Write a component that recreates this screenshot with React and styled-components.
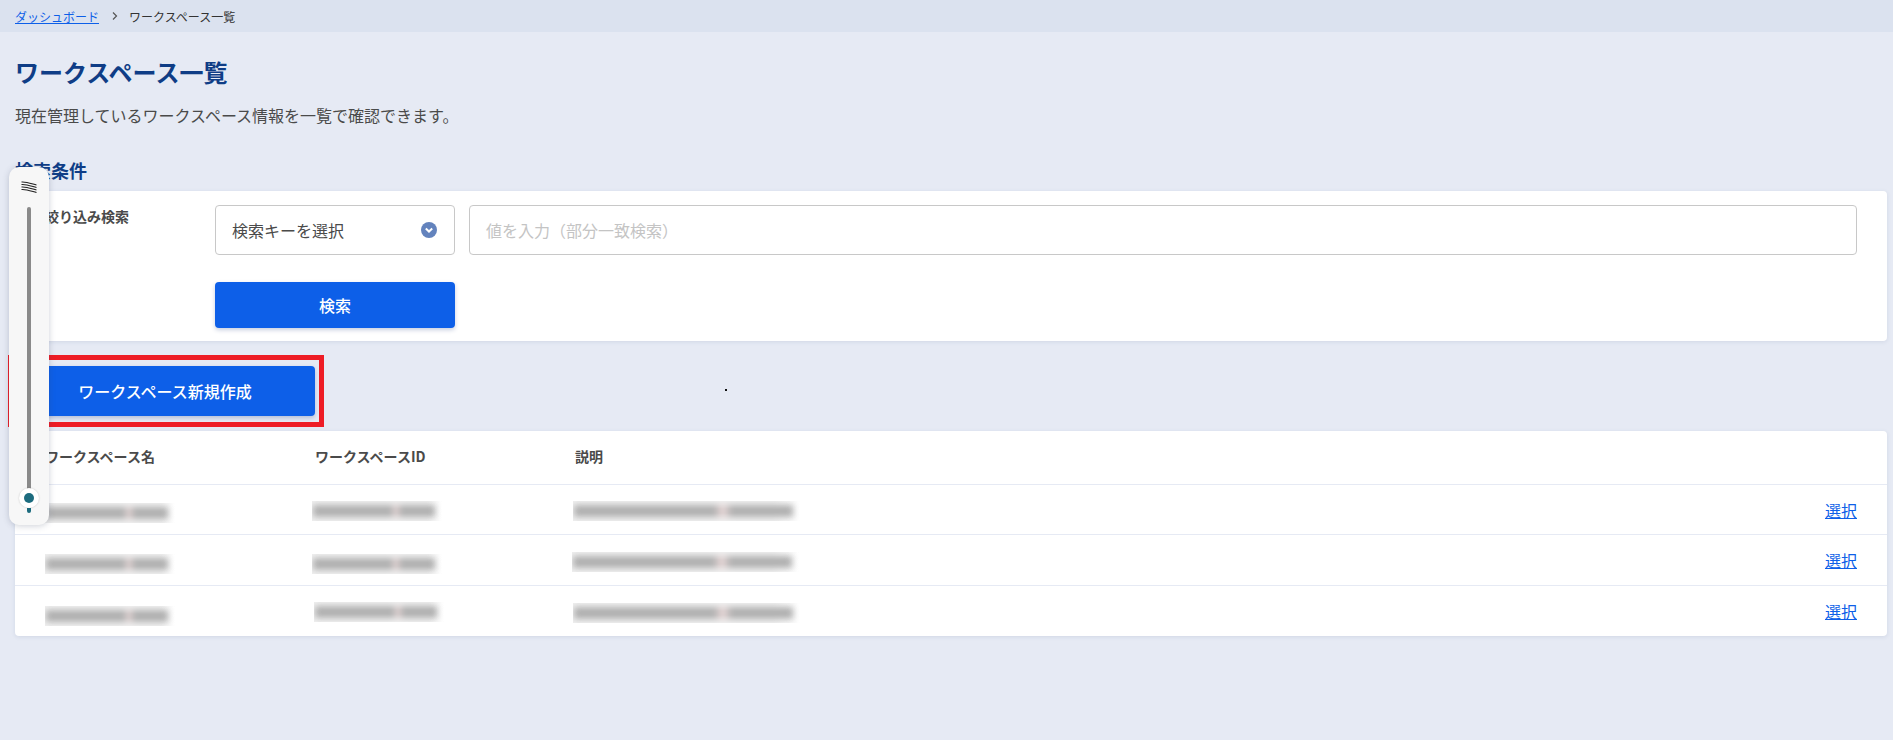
import React from "react";
import styled, { createGlobalStyle } from "styled-components";

const Global = createGlobalStyle`
    html, body {
        margin: 0;
        padding: 0;
        background: #e6eaf4;
        font-family: "Noto Sans CJK JP", "Noto Sans", sans-serif;
    }
`;

const Page = styled.div`
    position: relative;
    width: 1893px;
    height: 740px;
    overflow: hidden;
    background: #e6eaf4;
`;

const Breadcrumb = styled.nav`
    display: flex;
    align-items: center;
    height: 32px;
    padding-left: 15px;
    background: #dbe2ef;
    font-size: 12px;
    color: #333;
`;

const CrumbLink = styled.a`
    width: 86px;
    color: #0d5fe8;
    text-decoration: underline;
    white-space: nowrap;
`;

const CrumbSep = styled.span`
    display: flex;
    width: 28px;
    justify-content: center;
    color: #555;
`;

const Main = styled.main`
    padding: 0 6px 0 15px;
`;

const Title = styled.h1`
    margin: 22px 0 0;
    font-size: 24px;
    line-height: 36px;
    font-weight: 700;
    color: #0f3d86;
`;

const Lead = styled.p`
    margin: 13px 0 0;
    font-size: 16px;
    line-height: 24px;
    color: #4a4a4a;
`;

const SectionTitle = styled.h2`
    margin: 30px 0 0;
    font-size: 18px;
    line-height: 26px;
    height: 34px;
    font-weight: 700;
    color: #0f3d86;
`;

const Card = styled.section`
    background: #fff;
    border-radius: 4px;
    box-shadow: 0 1px 4px rgba(60, 80, 130, 0.12);
`;

const SearchCard = styled(Card)`
    display: grid;
    grid-template-columns: 170px 240px 1fr;
    column-gap: 0;
    row-gap: 27px;
    padding: 14px 30px 13px;
`;

const FieldLabel = styled.label`
    font-size: 14px;
    line-height: 22px;
    font-weight: 700;
    color: #4a4a4a;
`;

const Select = styled.div`
    display: flex;
    align-items: center;
    justify-content: space-between;
    box-sizing: border-box;
    height: 50px;
    padding: 0 17px 0 16px;
    border: 1px solid #c8c8c8;
    border-radius: 4px;
    font-size: 16px;
    color: #4a4a4a;
`;

const TextInput = styled.div`
    display: flex;
    align-items: center;
    box-sizing: border-box;
    height: 50px;
    margin-left: 14px;
    padding-left: 16px;
    border: 1px solid #c8c8c8;
    border-radius: 4px;
    font-size: 16px;
    color: #c4c4c4;
`;

const Button = styled.button`
    display: block;
    width: ${props => props.$width}px;
    height: ${props => props.$height}px;
    padding: 0;
    border: 0;
    border-radius: 4px;
    background: #0d5fe8;
    box-shadow: 0 2px 4px rgba(30, 60, 130, 0.25);
    color: #fff;
    font-family: inherit;
    font-size: 16px;
    font-weight: 500;
`;

const ActionRow = styled.div`
    position: relative;
    padding: 25px 0 15px;
`;

const Highlight = styled.div`
    position: absolute;
    left: -7px;
    top: 14px;
    width: 316px;
    height: 72px;
    box-sizing: border-box;
    border: 5px solid #ee1c25;
    background: transparent;
    pointer-events: none;
`;

const TableCard = styled(Card)``;

const Row = styled.div`
    display: grid;
    grid-template-columns: 270px 260px 1fr auto;
    align-items: center;
    box-sizing: border-box;
    height: ${props => props.$height}px;
    padding: 0 30px;
    border-bottom: ${props => (props.$last ? "0" : "1px solid #e6eaf4")};
`;

const HeadCell = styled.div`
    margin-bottom: 4px;
    font-size: 14px;
    font-weight: 700;
    color: #4a4a4a;
`;

const Redacted = styled.div`
    position: relative;
    overflow: hidden;
    width: ${props => props.$width}px;
    height: 20px;
    margin-left: ${props => props.$x}px;
    margin-top: ${props => props.$y * 2}px;
    background: linear-gradient(to right, #f1f1f1 88%, #ffffff 100%);
`;

const RedactedInk = styled.div`
    position: absolute;
    left: 1px;
    right: 7px;
    top: 4px;
    height: 12px;
    background: linear-gradient(
        to right,
        #b0b0b0 0,
        #b0b0b0 64%,
        #ead8d8 68%,
        #b0b0b0 72%,
        #b0b0b0 100%
    );
    filter: blur(3px);
`;

const SelectLink = styled.a`
    font-size: 16px;
    color: #0d5fe8;
    text-decoration: underline;
`;

const Zoomer = styled.aside`
    position: absolute;
    left: 9px;
    top: 167px;
    width: 40px;
    height: 358px;
    background: #f7f7f7;
    border-radius: 10px;
    box-shadow: 0 1px 6px rgba(60, 70, 100, 0.25);
`;

const ZoomerIcon = styled.svg`
    position: absolute;
    left: 12px;
    top: 14px;
`;

const ZoomerTrack = styled.div`
    position: absolute;
    left: 18px;
    top: 40px;
    width: 4px;
    height: 283px;
    border-radius: 2px;
    background: #8a8a8a;
`;

const ZoomerKnob = styled.div`
    position: absolute;
    left: 10px;
    top: 321px;
    width: 20px;
    height: 20px;
    border-radius: 50%;
    background: #fff;
    box-shadow: 0 0 2px rgba(0, 0, 0, 0.2);
    display: flex;
    align-items: center;
    justify-content: center;

    &::after {
        content: "";
        width: 10px;
        height: 10px;
        border-radius: 50%;
        background: #1c6b7e;
    }
`;

const ZoomerEnd = styled.div`
    position: absolute;
    left: 18px;
    top: 341px;
    width: 4px;
    height: 5px;
    border-radius: 0 0 2px 2px;
    background: #1c6b7e;
`;

const Speck = styled.div`
    position: absolute;
    left: 725px;
    top: 389px;
    width: 2px;
    height: 2px;
    background: #111;
`;

const rows = [
    [{ x: 0, y: 3 }, { x: -3, y: 1 }, { x: -2, y: 1 }],
    [{ x: 0, y: 3.5 }, { x: -3, y: 3.5 }, { x: -3, y: 1.5 }],
    [{ x: 0, y: 5 }, { x: -1, y: 1 }, { x: -2, y: 2 }],
];

export default function App() {
    return (
        <Page>
            <Global />
            <Breadcrumb>
                <CrumbLink>ダッシュボード</CrumbLink>
                <CrumbSep>
                    <svg width="8" height="10" viewBox="0 0 8 10" fill="none" stroke="#555" strokeWidth="1.2">
                        <path d="M2 1.5 L5.5 5 L2 8.5" />
                    </svg>
                </CrumbSep>
                <span>ワークスペース一覧</span>
            </Breadcrumb>
            <Main>
                <Title>ワークスペース一覧</Title>
                <Lead>現在管理しているワークスペース情報を一覧で確認できます。</Lead>
                <SectionTitle>検索条件</SectionTitle>
                <SearchCard>
                    <FieldLabel>絞り込み検索</FieldLabel>
                    <Select>
                        検索キーを選択
                        <svg width="16" height="16" viewBox="0 0 16 16">
                            <circle cx="8" cy="8" r="8" fill="#6383bd" />
                            <path d="M4.8 6.6 L8 9.6 L11.2 6.6" fill="none" stroke="#fff" strokeWidth="2" />
                        </svg>
                    </Select>
                    <TextInput>値を入力（部分一致検索）</TextInput>
                    <span />
                    <Button $width={240} $height={46}>検索</Button>
                </SearchCard>
                <ActionRow>
                    <Button $width={300} $height={50}>ワークスペース新規作成</Button>
                    <Highlight />
                </ActionRow>
                <TableCard>
                    <Row $height={54}>
                        <HeadCell>ワークスペース名</HeadCell>
                        <HeadCell>ワークスペースID</HeadCell>
                        <HeadCell>説明</HeadCell>
                        <span />
                    </Row>
                    {rows.map((cells, i) => (
                        <Row key={i} $height={i === 1 ? 51 : 50} $last={i === 2}>
                            <Redacted $width={130} $x={cells[0].x} $y={cells[0].y}><RedactedInk /></Redacted>
                            <Redacted $width={130} $x={cells[1].x} $y={cells[1].y}><RedactedInk /></Redacted>
                            <Redacted $width={227} $x={cells[2].x} $y={cells[2].y}><RedactedInk /></Redacted>
                            <SelectLink>選択</SelectLink>
                        </Row>
                    ))}
                </TableCard>
            </Main>
            <Speck />
            <Zoomer>
                <ZoomerIcon width="16" height="12" viewBox="0 0 16 12" fill="none" stroke="#222" strokeWidth="1.1">
                    <path d="M0.5 1 C5 0.5 10 2.5 15.5 4" />
                    <path d="M0.5 3.5 C5 3 10 5 15.5 6.5" />
                    <path d="M0.5 6 C5 5.5 10 7.5 15.5 9" />
                    <path d="M0.5 8.5 C5 8 10 10 15.5 11.5" />
                </ZoomerIcon>
                <ZoomerTrack />
                <ZoomerKnob />
                <ZoomerEnd />
            </Zoomer>
        </Page>
    );
}
